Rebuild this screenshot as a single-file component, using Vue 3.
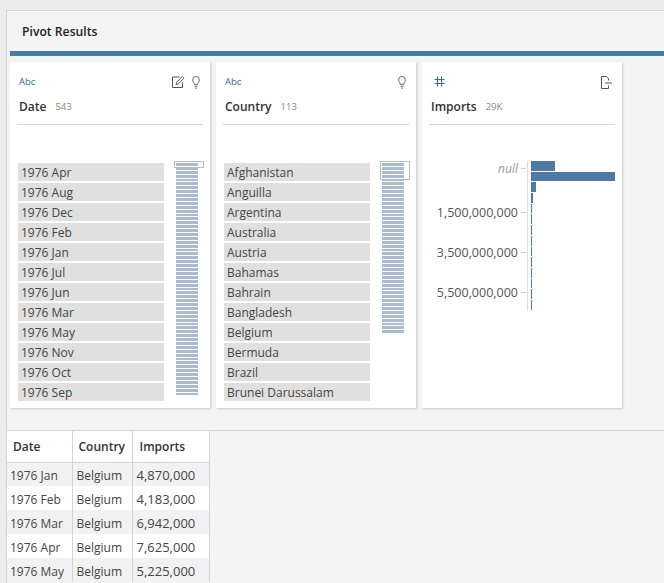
<template>
  <div class="page">
    <div class="panel">
      <div class="title-row"><span class="title">Pivot Results</span></div>
      <div class="accent"></div>
      <div class="cards">
        <!-- 离散字段卡片 -->
        <div v-for="card in cards" :key="card.name" class="card">
          <div class="card-top">
            <span class="type">Abc</span>
            <div class="icons">
              <svg v-if="card.edit" width="14" height="14" viewBox="0 0 14 14" fill="none" stroke="#555" stroke-width="1">
                <path d="M11.5 7.5v5h-10v-10.500h7" />
                <path d="M5 9.500l.6-2.300 5.700-5.700 1.700 1.700-5.700 5.700z" />
              </svg>
              <svg width="8" height="13" viewBox="0 0 10 14" preserveAspectRatio="none" fill="none" stroke="#555" stroke-width="1">
                <path d="M3 9c0-1.500-2.200-2.500-2.200-4.800a4.200 3.700 0 0 1 8.400 0c0 2.300-2.200 3.300-2.200 4.800z" />
                <path d="M3 11h4M3.800 13h2.400" />
              </svg>
            </div>
          </div>
          <div class="card-head">
            <span class="name">{{ card.name }}</span>
            <span class="count">{{ card.count }}</span>
          </div>
          <div class="card-body">
            <div class="values">
              <div v-for="v in card.values" :key="v" class="value">{{ v }}</div>
            </div>
            <div class="scroll">
              <div class="viewport"></div>
              <div v-for="n in card.stripes" :key="n" class="stripe"></div>
            </div>
          </div>
        </div>

        <!-- 数值字段卡片 -->
        <div class="card">
          <div class="card-top">
            <svg class="hash" width="11" height="11" viewBox="0 0 11 11" fill="none" stroke="#2f6f8f" stroke-width="1">
              <path d="M3.500 0.500v10M7.500 0.500v10M0.500 3.500h10M0.500 7.500h10" />
            </svg>
            <div class="icons">
              <svg width="11" height="13" viewBox="0 0 11 13" fill="none" stroke="#555" stroke-width="1">
                <path d="M7.500 4.500v-2l-2-2h-5v12h7v-3" />
                <path d="M4 7h7" />
              </svg>
            </div>
          </div>
          <div class="card-head">
            <span class="name">Imports</span>
            <span class="count">29K</span>
          </div>
          <div class="chart">
            <div class="axis">
              <div v-for="l in axisLabels" :key="l.text" class="axis-row" :class="{ nullrow: l.isNull }">
                <span>{{ l.text }}</span><i class="tick"></i>
              </div>
            </div>
            <div class="bars">
              <div v-for="(w, i) in bars" :key="i" class="bar-slot">
                <div class="bar" :style="{ width: w + 'px' }"></div>
              </div>
            </div>
          </div>
        </div>
      </div>
      <div class="table-wrap">
        <table>
          <thead>
            <tr>
              <th class="c1">Date</th>
              <th class="c2">Country</th>
              <th class="c3">Imports</th>
            </tr>
          </thead>
          <tbody>
            <tr v-for="r in rows" :key="r[0]">
              <td>{{ r[0] }}</td>
              <td class="shifted">Belgium</td>
              <td class="shifted num">{{ r[1] }}</td>
            </tr>
          </tbody>
        </table>
      </div>
    </div>
  </div>
</template>

<script setup>
const cards = [
  {
    name: 'Date',
    count: '543',
    edit: true,
    stripes: 60,
    values: ['1976 Apr', '1976 Aug', '1976 Dec', '1976 Feb', '1976 Jan', '1976 Jul', '1976 Jun', '1976 Mar', '1976 May', '1976 Nov', '1976 Oct', '1976 Sep']
  },
  {
    name: 'Country',
    count: '113',
    edit: false,
    stripes: 44,
    values: ['Afghanistan', 'Anguilla', 'Argentina', 'Australia', 'Austria', 'Bahamas', 'Bahrain', 'Bangladesh', 'Belgium', 'Bermuda', 'Brazil', 'Brunei Darussalam']
  }
]

const axisLabels = [
  { text: 'null', isNull: true },
  { text: '1,500,000,000' },
  { text: '3,500,000,000' },
  { text: '5,500,000,000' }
]

const bars = [24, 84, 5, 2, 1, 1, 1, 1, 1, 1, 1, 1, 1, 1]

const rows = [
  ['1976 Jan', '4,870,000'],
  ['1976 Feb', '4,183,000'],
  ['1976 Mar', '6,942,000'],
  ['1976 Apr', '7,625,000'],
  ['1976 May', '5,225,000']
]
</script>

<style>
html, body {
  margin: 0;
  background: #f3f3f4;
}
</style>

<style scoped>
.page {
  width: 664px;
  height: 583px;
  overflow: hidden;
  background: #ececec;
  padding: 10px 0 0 6px;
  box-sizing: border-box;
  font-family: "Open Sans", "Noto Sans", sans-serif;
  color: #333;
}

.panel {
  height: 573px;
  background: #f4f4f5;
  border-left: 1px solid #d4d4d4;
  border-top: 1px solid #d4d4d4;
}

.title-row {
  height: 40px;
  display: flex;
  align-items: center;
  padding-left: 15px;
  box-sizing: border-box;
}

.title {
  font-size: 12.200px;
  font-weight: 600;
  color: #222;
}

.accent {
  height: 5px;
  margin-left: 3px;
  background: #3f7fa6;
}

.cards {
  display: flex;
  gap: 6px;
  margin: 6px 0 0 3px;
}

.card {
  width: 200px;
  height: 346px;
  box-sizing: border-box;
  background: #fff;
  box-shadow: 1px 1px 2px rgba(0, 0, 0, 0.18);
  padding: 0 7px;
}

.card-top {
  height: 27px;
  padding: 11px 2px 0;
  box-sizing: border-box;
  display: flex;
  justify-content: space-between;
  align-items: center;
}

.type {
  font-size: 9.500px;
  color: #2f6f8f;
}

.hash {
  margin-left: 3px;
}

.icons {
  display: flex;
  gap: 7px;
  align-items: center;
  margin: 2px 1px 0 0;
}

.card-head {
  height: 35px;
  padding: 0 2px;
  border-bottom: 1px solid #d4d4d4;
  display: flex;
  align-items: center;
  gap: 9px;
}

.name {
  font-size: 12px;
  font-weight: 600;
  color: #333;
}

.count {
  font-size: 9.500px;
  color: #888;
}

.card-body {
  display: flex;
  justify-content: space-between;
  padding: 38px 5px 0 1px;
}

.values {
  width: 146px;
  display: flex;
  flex-direction: column;
  gap: 2px;
}

.value {
  height: 18px;
  line-height: 20px;
  background: #e0e0e0;
  padding-left: 3px;
  font-size: 12px;
  color: #444;
}

.scroll {
  position: relative;
  width: 22px;
  display: flex;
  flex-direction: column;
  gap: 1px;
  height: fit-content;
}

.viewport {
  position: absolute;
  left: -2px;
  top: -2px;
  width: 30px;
  height: 7px;
  border: 1px solid #bbb;
  box-sizing: border-box;
}

.card:nth-child(2) .viewport {
  height: 19px;
}

.stripe {
  height: 2.900px;
  background: #a9bad1;
}

.chart {
  display: flex;
  padding-top: 36px;
}

.axis {
  width: 98px;
  border-right: 1px solid #d8dde5;
  height: 150px;
  margin-right: 3px;
  flex-shrink: 0;
}

.axis-row {
  height: 40px;
  display: flex;
  justify-content: flex-end;
  align-items: center;
  font-size: 12.500px;
  color: #555;
}

.axis-row.nullrow {
  height: 13px;
  margin: 1px 0 17px;
  font-style: italic;
  color: #999;
  font-size: 12px;
}

.tick {
  width: 5px;
  height: 1px;
  background: #ccc;
  margin-left: 3px;
  margin-right: 1px;
}

.bars {
  display: flex;
  flex-direction: column;
  gap: 1px;
}

.bar-slot {
  height: 9.700px;
}

.bar {
  height: 100%;
  background: #4e79a7;
}

.table-wrap {
  margin-top: 22px;
  border-top: 1px solid #d4d4d4;
}

table {
  border-collapse: collapse;
  table-layout: fixed;
  width: 202px;
  background: #fff;
  font-size: 12px;
}

th {
  height: 31px;
  text-align: left;
  font-weight: 600;
  color: #333;
  border-right: 1px solid #d4d4d4;
  border-bottom: 1px solid #d4d4d4;
  padding: 0 0 0 6px;
  box-sizing: border-box;
}

.c1 {
  width: 65px;
}

.c2 {
  width: 60px;
}

.c3 {
  width: 77px;
  padding-left: 7px;
}

td {
  height: 24px;
  padding: 2px 0 0 3px;
  color: #444;
  border-right: 1px solid #d4d4d4;
  box-sizing: border-box;
}

td.shifted {
  padding-left: 4px;
}

.num {
  font-size: 13px;
}

tbody tr:nth-child(odd) {
  background: #f2f2f2;
}
</style>
